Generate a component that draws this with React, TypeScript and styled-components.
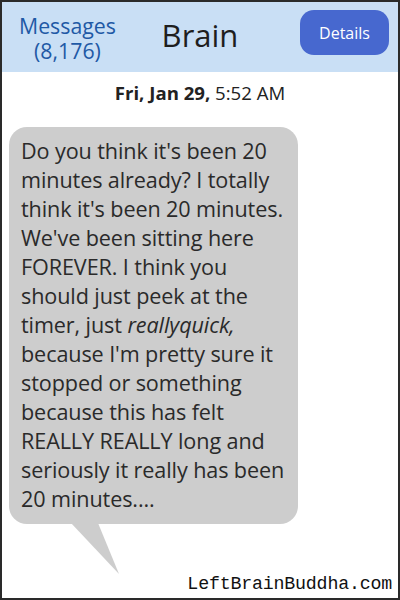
import styled, { createGlobalStyle } from 'styled-components';

const GlobalStyle = createGlobalStyle`
  html, body {
    margin: 0;
    padding: 0;
    background: #ffffff;
  }
  * {
    box-sizing: border-box;
  }
`;

const Screen = styled.div`
  width: 400px;
  height: 600px;
  border: 2px solid #2a2a2a;
  background: #ffffff;
  display: flex;
  flex-direction: column;
  font-family: 'Open Sans', 'Noto Sans', sans-serif;
  overflow: hidden;
`;

const Header = styled.header`
  height: 70px;
  background: #c9dff5;
  display: grid;
  grid-template-columns: 1fr auto 1fr;
  align-items: center;
  padding: 0 9px;
`;

const BackLink = styled.div`
  justify-self: start;
  margin-left: 8px;
  color: #1f59a5;
  font-size: 21.3px;
  line-height: 25.5px;
  text-align: center;
  margin-top: 2px;
`;

const Title = styled.h1`
  margin: 0;
  font-weight: 400;
  font-size: 31px;
  color: #1e1e1e;
  line-height: 1;
  margin-top: -4px;
`;

const DetailsButton = styled.button`
  justify-self: end;
  width: 89px;
  height: 45px;
  border: none;
  border-radius: 14px;
  background: #4768cf;
  color: #ffffff;
  font-family: inherit;
  font-size: 16px;
  margin-top: -9px;
`;

const Stamp = styled.div`
  text-align: center;
  font-size: 18.6px;
  color: #222;
  padding-top: 9px;
  line-height: 24px;

  b {
    font-weight: 700;
  }
`;

const Thread = styled.div`
  flex: 1;
  display: flex;
  flex-direction: column;
  padding: 22px 0 0 7px;
`;

const Bubble = styled.div`
  position: relative;
  width: 289px;
  background: #cdcdcd;
  border-radius: 18px;
  padding: 9px 5px 11px 12px;
  color: #2a2a2a;
  font-size: 21.6px;
  line-height: 29px;
  letter-spacing: -0.1px;

  em {
    font-style: italic;
  }
`;

const Tail = styled.svg`
  position: absolute;
  left: 61px;
  top: 100%;
  margin-top: -1px;
`;

const Footer = styled.div`
  margin-top: auto;
  text-align: right;
  padding: 0 6px 4px 0;
  font-family: 'Liberation Mono', 'DejaVu Sans Mono', monospace;
  font-size: 18.3px;
  color: #111;
  letter-spacing: -0.2px;
`;

export default function App() {
  return (
    <>
      <GlobalStyle />
      <Screen>
        <Header>
          <BackLink>
            Messages
            <br />
            (8,176)
          </BackLink>
          <Title>Brain</Title>
          <DetailsButton>Details</DetailsButton>
        </Header>
        <Stamp>
          <b>Fri, Jan 29,</b> 5:52 AM
        </Stamp>
        <Thread>
          <Bubble>
            Do you think it's been 20 minutes already? I totally think it's been 20 minutes.
            We've been sitting here FOREVER. I think you should just peek at the timer, just{' '}
            <em>reallyquick,</em> because I'm pretty sure it stopped or something because this
            has felt REALLY REALLY long and seriously it really has been 20 minutes....
            <Tail width="50" height="52" viewBox="0 0 50 52">
              <polygon points="1,0 28,0 49,51" fill="#cdcdcd" />
            </Tail>
          </Bubble>
          <Footer>LeftBrainBuddha.com</Footer>
        </Thread>
      </Screen>
    </>
  );
}
